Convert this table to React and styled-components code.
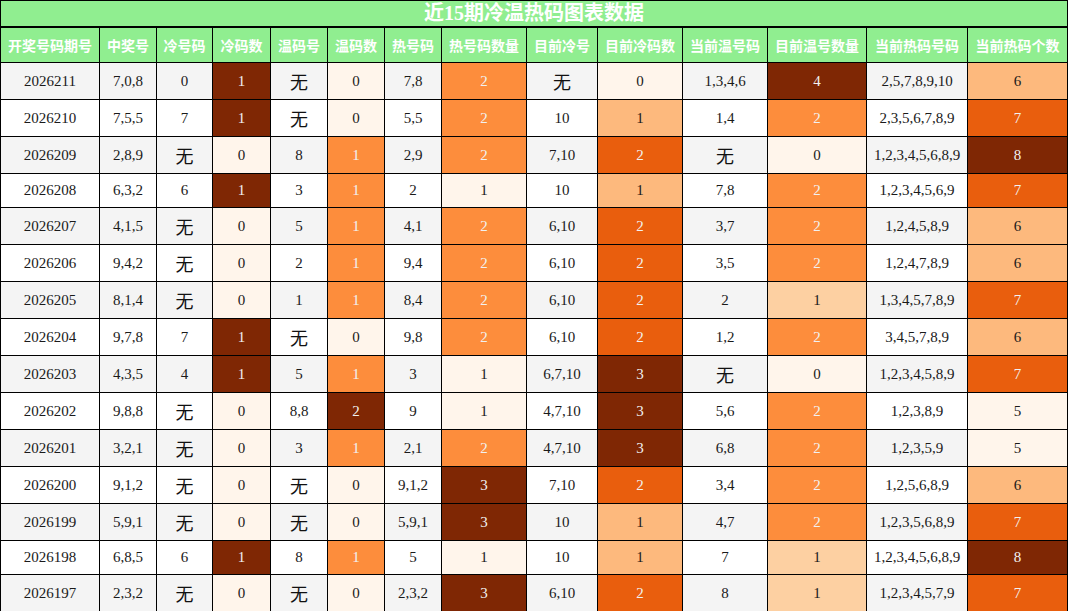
import React from "react";
import styled, { createGlobalStyle } from "styled-components";

const GlobalStyle = createGlobalStyle`
  html, body {
    margin: 0;
    padding: 0;
    background: #ffffff;
  }
  body {
    font-family: "Liberation Serif", "Times New Roman", serif;
  }
`;

const HEADERS = [
  "开奖号码期号", "中奖号", "冷号码", "冷码数", "温码号", "温码数", "热号码",
  "热号码数量", "目前冷号", "目前冷码数", "当前温号码", "目前温号数量",
  "当前热码号码", "当前热码个数",
];

const WIDTHS = [99, 57, 56, 58, 57, 57, 57, 85, 71, 85, 85, 99, 101, 100];

// columns painted with the orange gradient
const GRADIENT_COLS = [3, 5, 7, 9, 11, 13];

const N = "无";

const ROWS = [
  ["2026211", "7,0,8", "0", "1", N, "0", "7,8", "2", N, "0", "1,3,4,6", "4", "2,5,7,8,9,10", "6"],
  ["2026210", "7,5,5", "7", "1", N, "0", "5,5", "2", "10", "1", "1,4", "2", "2,3,5,6,7,8,9", "7"],
  ["2026209", "2,8,9", N, "0", "8", "1", "2,9", "2", "7,10", "2", N, "0", "1,2,3,4,5,6,8,9", "8"],
  ["2026208", "6,3,2", "6", "1", "3", "1", "2", "1", "10", "1", "7,8", "2", "1,2,3,4,5,6,9", "7"],
  ["2026207", "4,1,5", N, "0", "5", "1", "4,1", "2", "6,10", "2", "3,7", "2", "1,2,4,5,8,9", "6"],
  ["2026206", "9,4,2", N, "0", "2", "1", "9,4", "2", "6,10", "2", "3,5", "2", "1,2,4,7,8,9", "6"],
  ["2026205", "8,1,4", N, "0", "1", "1", "8,4", "2", "6,10", "2", "2", "1", "1,3,4,5,7,8,9", "7"],
  ["2026204", "9,7,8", "7", "1", N, "0", "9,8", "2", "6,10", "2", "1,2", "2", "3,4,5,7,8,9", "6"],
  ["2026203", "4,3,5", "4", "1", "5", "1", "3", "1", "6,7,10", "3", N, "0", "1,2,3,4,5,8,9", "7"],
  ["2026202", "9,8,8", N, "0", "8,8", "2", "9", "1", "4,7,10", "3", "5,6", "2", "1,2,3,8,9", "5"],
  ["2026201", "3,2,1", N, "0", "3", "1", "2,1", "2", "4,7,10", "3", "6,8", "2", "1,2,3,5,9", "5"],
  ["2026200", "9,1,2", N, "0", N, "0", "9,1,2", "3", "7,10", "2", "3,4", "2", "1,2,5,6,8,9", "6"],
  ["2026199", "5,9,1", N, "0", N, "0", "5,9,1", "3", "10", "1", "4,7", "2", "1,2,3,5,6,8,9", "7"],
  ["2026198", "6,8,5", "6", "1", "8", "1", "5", "1", "10", "1", "7", "1", "1,2,3,4,5,6,8,9", "8"],
  ["2026197", "2,3,2", N, "0", N, "0", "2,3,2", "3", "6,10", "2", "8", "1", "1,2,3,4,5,7,9", "7"],
];

const ORANGES = [
  "#fff5eb", "#fee6ce", "#fdd0a2", "#fdae6b", "#fd8d3c",
  "#f16913", "#d94801", "#a63603", "#7f2704",
];

const hexToRgb = (h) => [1, 3, 5].map((i) => parseInt(h.slice(i, i + 2), 16));

function oranges(t) {
  const pos = Math.max(0, Math.min(1, t)) * (ORANGES.length - 1);
  const i = Math.min(Math.floor(pos), ORANGES.length - 2);
  const f = pos - i;
  const a = hexToRgb(ORANGES[i]);
  const b = hexToRgb(ORANGES[i + 1]);
  return a.map((v, k) => Math.round(v + (b[k] - v) * f));
}

function luminance([r, g, b]) {
  const lin = (c) => {
    c = c / 255;
    return c <= 0.03928 ? c / 12.92 : Math.pow((c + 0.055) / 1.055, 2.4);
  };
  return 0.2126 * lin(r) + 0.7152 * lin(g) + 0.0722 * lin(b);
}

// min / max for each painted column
const ranges = {};
GRADIENT_COLS.forEach((c) => {
  const vals = ROWS.map((r) => Number(r[c]));
  ranges[c] = [Math.min(...vals), Math.max(...vals)];
});

function paint(col, value) {
  if (!ranges[col]) return null;
  const [lo, hi] = ranges[col];
  const rgb = oranges(hi === lo ? 0 : (Number(value) - lo) / (hi - lo));
  return {
    bg: `rgb(${rgb.join(",")})`,
    fg: luminance(rgb) < 0.408 ? "#f1f1f1" : "#1a1a1a",
  };
}

const Table = styled.table`
  width: 1068px;
  table-layout: fixed;
  border-collapse: collapse;
  border: 1px solid #000;
`;

const Col = styled.col`
  width: ${(p) => p.$w}px;
`;

const TitleCell = styled.th`
  background: #90ee90;
  color: #ffffff;
  border: 1px solid #000;
  border-bottom-width: 2px;
  padding: 0;
  height: 25px;
  line-height: 25px;
  font-size: 20px;
  font-weight: bold;
  font-family: "Liberation Serif", "Noto Sans CJK SC", serif;
`;

const HeadCell = styled.th`
  background: #90ee90;
  color: #ffffff;
  border: 1px solid #000;
  padding: 7px 0;
  line-height: 20px;
  font-size: 14px;
  font-weight: bold;
  font-family: "Noto Sans CJK SC", "Noto Sans", sans-serif;
  white-space: nowrap;
  overflow: hidden;
`;

const Row = styled.tr`
  background: ${(p) => (p.$alt ? "#f4f4f4" : "#ffffff")};
`;

const Cell = styled.td`
  border: 1px solid #000;
  padding: 8px 0;
  text-align: center;
  font-size: 15px;
  line-height: 17px;
  color: ${(p) => p.$fg || "#1a1a1a"};
  background: ${(p) => p.$bg || "transparent"};
  white-space: nowrap;
`;

const None = styled.span`
  display: inline-block;
  vertical-align: middle;
  font-family: "Noto Sans CJK SC", sans-serif;
  font-size: 18px;
  line-height: 20px;
  color: #111111;
`;

export default function App() {
  return (
    <>
      <GlobalStyle />
      <Table>
        <colgroup>
          {WIDTHS.map((w, i) => (
            <Col key={i} $w={w} />
          ))}
        </colgroup>
        <thead>
          <tr>
            <TitleCell colSpan={HEADERS.length}>近15期冷温热码图表数据</TitleCell>
          </tr>
          <tr>
            {HEADERS.map((h) => (
              <HeadCell key={h}>{h}</HeadCell>
            ))}
          </tr>
        </thead>
        <tbody>
          {ROWS.map((row, r) => (
            <Row key={row[0]} $alt={r % 2 === 0}>
              {row.map((v, c) => {
                const p = paint(c, v);
                return (
                  <Cell key={c} $bg={p && p.bg} $fg={p && p.fg}>
                    {v === N ? <None>{v}</None> : v}
                  </Cell>
                );
              })}
            </Row>
          ))}
        </tbody>
      </Table>
    </>
  );
}
